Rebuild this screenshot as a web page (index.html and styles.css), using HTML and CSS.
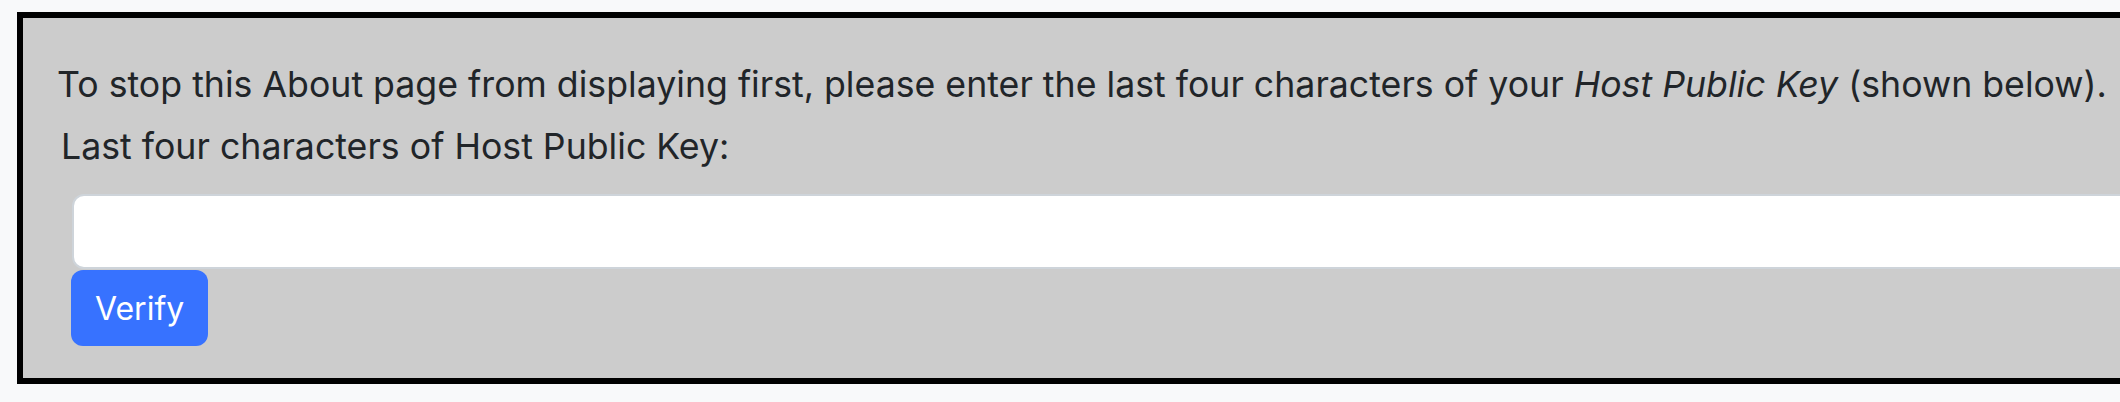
FILE: index.html
```html
<!DOCTYPE html>
<html lang="en">
<head>
    <meta charset="UTF-8">
    <meta name="viewport" content="width=device-width, initial-scale=1.0">
    <title>About</title>
    <link rel="stylesheet" href="styles.css">
</head>
<body>
    <div class="about-box">
        <p class="notice">To stop this About page from displaying first, please enter the last four characters of your <em>Host Public Key</em> (shown below).</p>

        <form class="verify-form" onsubmit="return false;">
            <label for="hostKey" class="key-label">Last four characters of Host Public Key:</label>
            <div class="key-group">
                <input type="text" id="hostKey" class="key-input">
                <button type="submit" class="verify-btn">Verify</button>
            </div>
        </form>
    </div>
</body>
</html>
```

FILE: styles.css
```css
html {
    overflow: hidden;
}
body {
    margin: 0;
    padding: 12px 0 0 17px;
    background-color: #f8f9fa;
    color: #212529;
    font-family: Inter, "Noto Sans", sans-serif;
    font-size: 35.7px;
    line-height: 54px;
}
.about-box {
    width: 2300px;
    padding: 39px 0 32px 34px;
    border: 6px solid #000;
    background-color: #cccccc;
}
.notice {
    margin: 0 0 8px;
}
.key-label {
    display: block;
    margin: 0 0 21px 4px;
}
.key-group {
    margin-left: 14px;
}
.key-input {
    display: block;
    box-sizing: border-box;
    width: 2240px;
    height: 75px;
    margin: 0 0 1px 1px;
    padding: 12px 24px;
    border: 2px solid #ced4da;
    border-radius: 12px;
    background-color: #fff;
    font: inherit;
}
.verify-btn {
    display: block;
    height: 76px;
    padding: 0 24px;
    border: none;
    border-radius: 12px;
    background-color: #3772ff;
    color: #fff;
    font-family: inherit;
    font-size: 32px;
    cursor: pointer;
}
```
